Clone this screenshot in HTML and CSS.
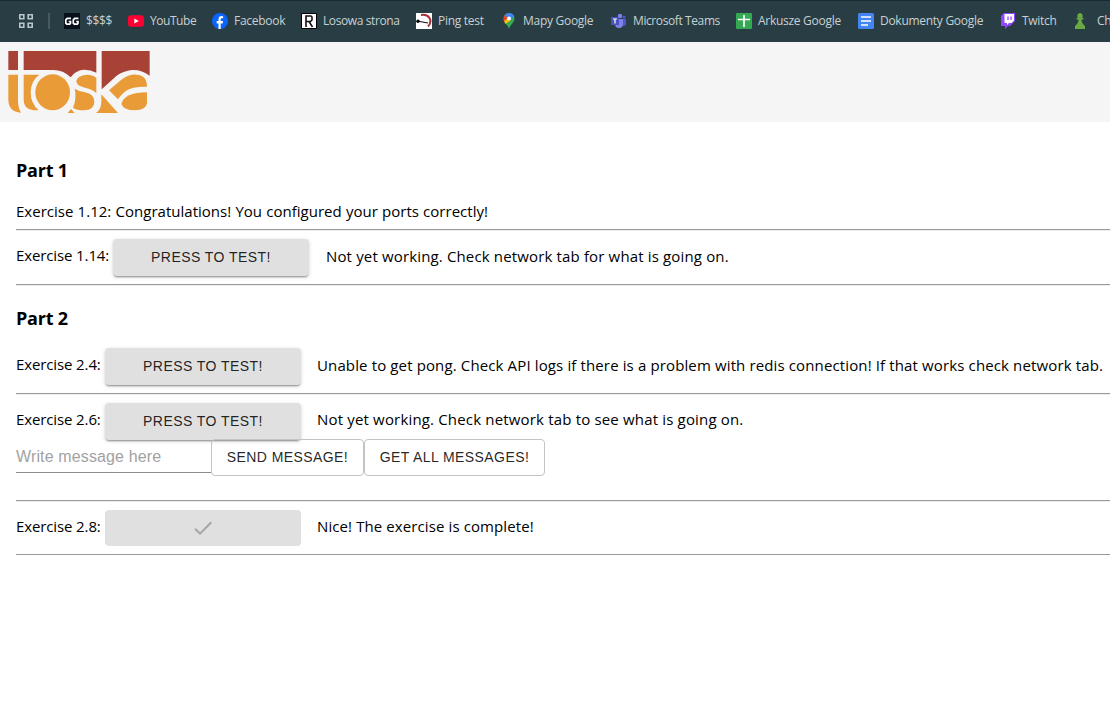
FILE: index.html
```html
<!DOCTYPE html>
<html lang="en"><head><meta charset="utf-8"><title>Toska exercises</title><link rel="stylesheet" href="styles.css"></head>
<body>
<nav class="bookmarks">
<svg class="apps" viewBox="0 0 14 14"><path d="M.8.8h4v4h-4zM9.2.8h4v4h-4zM.8 9.2h4v4h-4zM9.2 9.2h4v4h-4z"/></svg>
<span class="divider"></span>
<a class="bm b1"><svg viewBox="0 0 16 16"><path fill="#07101b" d="M0 0h16v16H0z"/><path fill="none" stroke="#fff" stroke-width="1.7" d="M7 5.3H3.2L1.8 6.8v3.4l1 1h3l.7-1V8.5H4.7M14.5 5.3h-3.8L9.3 6.8v3.4l1 1h3l.7-1V8.5h-1.8"/></svg><span>$$$$</span></a>
<a class="bm b2"><svg viewBox="0 0 16 16"><rect y="2.3" width="16" height="11.5" rx="3" fill="#ff0033"/><path fill="#fff" d="m6.3 5.5 4.5 2.5-4.5 2.5z"/></svg><span>YouTube</span></a>
<a class="bm b3"><svg viewBox="0 0 16 16"><circle cx="8" cy="8" r="8" fill="#0866ff"/><path fill="#fff" d="M6.500 16v-5.500H4.700V8h1.800V6.400c0-2.300 1-3.400 3.100-3.400l1.500.2v2.100H10c-1 0-1.300.4-1.300 1.400V8h2.400l-.5 2.500H8.700V16z"/></svg><span>Facebook</span></a>
<a class="bm b4"><svg viewBox="0 0 16 16"><path fill="#fff" stroke="#000" d="M.5.5h15v15H.5z"/><path fill="none" stroke="#111" stroke-width="1.6" d="M5 14V3h5l1 1v3L9.500 8.500H5M8 8.500 11.500 14"/></svg><span>Losowa strona</span></a>
<a class="bm b5"><svg viewBox="0 0 16 16"><path fill="#fff" d="M0 0h16v16H0z"/><path fill="none" stroke="#a63035" stroke-width="2" d="M5 2q6-1 8.500 3t-1.500 8.500"/><path stroke="#111" stroke-width="1.200" d="m1 8 11 2"/><circle cx="2" cy="8.300" r="1.700"/></svg><span>Ping test</span></a>
<a class="bm b6"><svg viewBox="0 0 16 16"><path fill="#34a853" d="M8 16C7 12 2.500 9.500 2.500 5.500a5.500 5.500 0 0 1 11 0C13.500 9.500 9 12 8 16z"/><path fill="#fbbc04" d="M2.800 7.500 6 4l4 3-5.500 4z"/><path fill="#ea4335" d="M3.800 2 7 5 3 8.300Q1.700 5 3.800 2z"/><path fill="#4285f4" d="M3.800 2Q6-.5 9.800.3 12 1 13 3L8.500 8 6 4z"/><circle cx="8" cy="5.500" r="2" fill="#fff"/></svg><span>Mapy Google</span></a>
<a class="bm b7"><svg viewBox="0 0 16 16"><circle cx="13" cy="4" r="1.600" fill="#5059c9"/><path fill="#5059c9" d="M10 6h5v4q0 3-3 3z"/><circle cx="9" cy="3" r="2.200" fill="#7b83eb"/><path fill="#7b83eb" d="M5 6h7v5q0 4-4 4t-4-4z"/><path fill="#4b53bc" d="M0 4h8v8H0z"/><path stroke="#fff" stroke-width="1.200" d="M2 6h4M4 6v4.500"/></svg><span>Microsoft Teams</span></a>
<a class="bm b8"><svg viewBox="0 0 16 16"><rect width="16" height="16" rx="1" fill="#34a853"/><path stroke="#fff" stroke-width="1.700" d="M2 6.500h12M8 2v12"/></svg><span>Arkusze Google</span></a>
<a class="bm b9"><svg viewBox="0 0 16 16"><rect width="16" height="16" rx="1.500" fill="#4285f4"/><path stroke="#fff" stroke-width="1.700" d="M3 4h10M3 8h10M3 12h7"/></svg><span>Dokumenty Google</span></a>
<a class="bm b10"><svg viewBox="0 0 16 16"><path fill="#9146ff" d="M4 0h11v8l-5 5H8l-3 3v-3H1V3z"/><path fill="#fff" d="M4.500 1H14v6.500L11.500 10H9l-2 2v-2H4.500z"/><path stroke="#9146ff" stroke-width="1.300" d="M8 3.500v3.500M11 3.500v3.500"/></svg><span>Twitch</span></a>
<a class="bm b11"><svg viewBox="0 0 16 16"><path fill="#69a842" d="M8 0a3 3 0 0 1 2 5h1.500v1.500h-2Q9.500 10 13 13v3H3v-3q3.500-3 3.500-6.500h-2V5H6a3 3 0 0 1 2-5z"/></svg><span>Ch</span></a>
</nav>
<header class="header">
<svg class="logo" viewBox="24 33 426 186">
<path class="red" d="M25 33h29v57H25zM71 33h218v65q-19-10-39-9-25 3-38 23-22-22-52-22H71zM305 33h144v74q-25-19-54-17-25 3-45 17l-45 41z"/>
<g class="orange">
<path d="M25 104h29v76q0 25 9 38-38-2-38-40z"/>
<path d="M71 104h47q-26 19-26 53 0 33 24 54h-15q-30-3-30-31z"/>
<ellipse cx="158" cy="157" rx="52" ry="54"/>
<path d="m203 219 10-12 11 12z"/>
<path d="M229 124q3-18 31-20 18 0 29 9v47q-11-12-34-17-26-5-26-19z"/>
<path d="M224 146q12 8 31 11 28 5 28 28 0 25-31 26-22 0-33-8 12-29 5-57z"/>
<path d="M288 219q16-12 16-34v-22l50 56z"/>
<path d="m327 151 36-31q24-18 47-16 31 2 31 36-39-1-57 9-18 10-30 29z"/>
<path d="M441 157v31q-2 22-36 23-34 0-41-19 8-34 77-35z"/>
</g>
</svg></header>
<main class="main">
<h3 class="part">Part 1</h3>
<p class="row r112"><span class="congrats">Exercise 1.12: Congratulations! You configured your ports correctly!</span></p>
<section class="row r114"><span class="label long">Exercise 1.14:</span><button class="test">PRESS TO TEST!</button><span class="msg m1">Not yet working. Check network tab for what is going on.</span></section>
<h3 class="part two">Part 2</h3>
<section class="row r24"><span class="label">Exercise 2.4:</span><button class="test up">PRESS TO TEST!</button><span class="msg m2">Unable to get pong. Check API logs if there is a problem with redis connection! If that works check network tab.</span></section>
<section class="row r26"><div class="line"><span class="label">Exercise 2.6:</span><button class="test up">PRESS TO TEST!</button><span class="msg m3">Not yet working. Check network tab to see what is going on.</span></div>
<div class="form"><input class="input" placeholder="Write message here"><button class="outline send">SEND MESSAGE!</button><button class="outline all">GET ALL MESSAGES!</button></div></section>
<section class="row r28"><span class="label">Exercise 2.8:</span><button class="test done" disabled><svg viewBox="0 0 24 24"><path d="M9 16.170 4.830 12l-1.420 1.410L9 19 21 7l-1.410-1.410z"/></svg></button><span class="msg m4">Nice! The exercise is complete!</span></section>
</main></body></html>
```
FILE: styles.css
```css
* { box-sizing: border-box; }
body { margin: 0; background: #fff; color: #000; font: 15px/24px "Open Sans", "Noto Sans", sans-serif; overflow: hidden; }
.bookmarks { height: 42px; display: flex; align-items: center; padding-bottom: 1px; background: #293e44; border-top: 1px solid #152b32; color: #c8d0d3; font-size: 12px; letter-spacing: -.28px; line-height: 18px; white-space: nowrap; overflow: hidden; }
.apps { width: 14px; height: 14px; margin-left: 19px; flex: none; fill: none; stroke: #b9c5c8; stroke-width: 1.6; }
.divider { width: 2px; height: 16px; margin: 0 14px 0 15px; background: #485b61; flex: none; }
.bm { display: flex; align-items: center; gap: 6px; flex: none; }
.bm svg { width: 16px; height: 16px; flex: none; }
.b1 { width: 64px; letter-spacing: -.4px; } .b2 { width: 84px; letter-spacing: -.45px; } .b3 { width: 89px; } .b4 { width: 115px; letter-spacing: -.4px; } .b5 { width: 85px; } .b6 { width: 110px; } .b7 { width: 125px; letter-spacing: -.4px; } .b8 { width: 122px; } .b9 { width: 142px; } .b10 { width: 72px; } .b11 { width: 60px; gap: 9px; }
.header { height: 80px; padding: 9px 8px; background: #f5f5f5; }
.logo { display: block; width: 142px; height: 62px; }
.red { fill: #a84136; }
.orange { fill: #e99b38; }
.main { padding-left: 16px; white-space: nowrap; }
.part { margin: 0; padding-top: 36px; height: 77px; font-size: 18px; line-height: 25px; font-weight: 700; letter-spacing: -.2px; }
.two { height: 63px; padding-top: 21px; }
.row { margin: 0; display: flex; align-items: center; border-bottom: 1px solid #999; box-shadow: 0 1px #eee; }
.r112 { height: 31px; padding-bottom: 6px; }
.r114 { height: 55px; }
.r24 { height: 46px; padding-bottom: 8px; }
.r26 { height: 107px; padding-top: 9px; flex-direction: column; align-items: flex-start; }
.line { height: 37px; display: flex; align-items: center; }
.r28 { height: 54px; }
.label { width: 89px; letter-spacing: -.12px; padding-bottom: 5px; }
.r28 .label { padding-bottom: 3px; }
.long { width: 97px; }
.congrats { letter-spacing: .02px; word-spacing: .25px; }
.msg { margin-left: 16px; padding-bottom: 3px; }
.m1 { letter-spacing: .15px; margin-left: 17px; }
.m2 { letter-spacing: .13px; padding-bottom: 4px; }
.m3 { letter-spacing: .17px; padding-bottom: 5px; }
.m4 { letter-spacing: .1px; padding-bottom: 4px; }
.test { width: 196px; height: 37px; padding: 0; border: 0; border-radius: 4px; background: #e0e0e0; color: rgba(0,0,0,.87); font: 14px/24px "Liberation Sans", sans-serif; letter-spacing: .45px; box-shadow: 0 2px 2px -1px rgba(0,0,0,.4), 0 1px 4px rgba(0,0,0,.15); }
.up { padding-bottom: 2px; }
.done { height: 36px; box-shadow: none; }
.done svg { display: block; width: 24px; height: 24px; margin: auto; fill: #a6a6a6; }
.form { display: flex; align-items: flex-start; }
.input { width: 195px; height: 33px; border: 0; border-bottom: 1px solid #8c8c8c; padding: 2px 0 0; font: 16px "Liberation Sans", sans-serif; letter-spacing: .13px; background: none; }
.input::placeholder { color: #a2a2a2; opacity: 1; }
.outline { height: 37px; margin-top: -1px; padding: 0 0 1px; border: 1px solid #c4c4c4; border-radius: 4px; background: none; color: rgba(0,0,0,.87); font: 14px "Liberation Sans", sans-serif; letter-spacing: .42px; }
.send { width: 153px; } .all { width: 181px; }
```
